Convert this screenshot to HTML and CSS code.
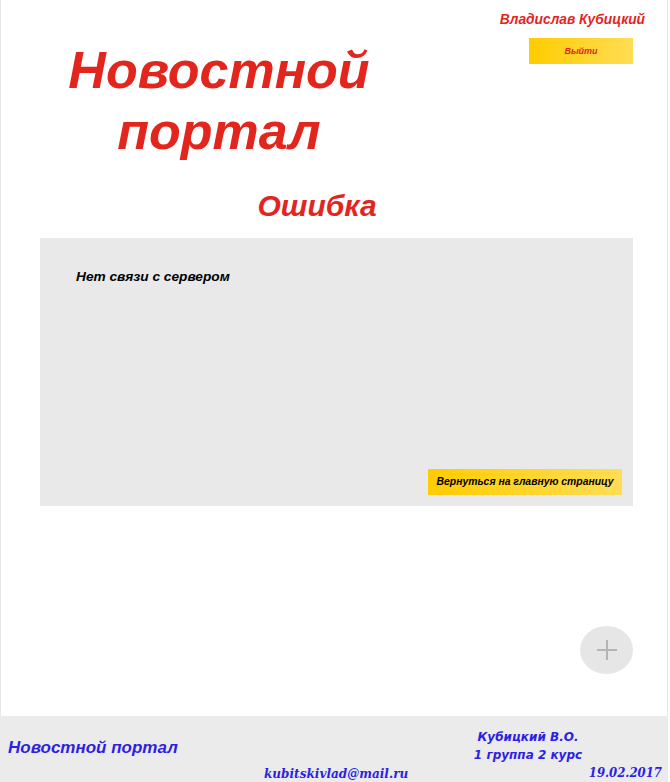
FILE: index.html
```html
<!DOCTYPE html>
<html>
<head>
<meta charset="UTF-8">
<meta name="viewport" content="width=device-width, initial-scale=1.0">
<title>Ошибка</title>
<link rel="stylesheet" href="styles.css">
</head>
<body>
	<div class="page">
		<!-- Header -->
		<div class="header">
			<h1 class="site-title">Новостной<br>портал</h1>
			<div class="user-box">
				<div class="user-name">Владислав Кубицкий</div>
				<a href="#" class="logout-button">Выйти</a>
			</div>
		</div>

		<!-- Error block -->
		<h2 class="error-title">Ошибка</h2>
		<div class="error-box">
			<p class="error-text">Нет связи с сервером</p>
			<a href="#" class="back-button">Вернуться на главную страницу</a>
		</div>

		<div class="fab-row">
			<a href="#" class="add-button">
				<svg width="22" height="22" viewBox="0 0 22 22"><path d="M11 1v20M1 11h20" stroke="#b4b4b4" stroke-width="2" fill="none"/></svg>
			</a>
		</div>

		<!-- Footer -->
		<div class="footer">
			<div class="footer-brand">Новостной портал</div>
			<div class="footer-author">Кубицкий В.О.<br>1 группа 2 курс</div>
			<div class="footer-mail">kubitskivlad@mail.ru</div>
			<div class="footer-date">19.02.2017</div>
		</div>
	</div>
</body>
</html>
```

FILE: styles.css
```css
body {
	font-family: "Liberation Sans", Arial, sans-serif;
	margin: 0;
	padding: 0;
	background-color: #fff;
}

.page {
	width: 668px;
	height: 782px;
	border-left: 1px solid #e6e6e6;
	border-right: 1px solid #e6e6e6;
	box-sizing: border-box;
	display: flex;
	flex-direction: column;
}

/* Header */
.header {
	display: flex;
	height: 176px;
}

.site-title {
	width: 436px;
	margin: 0;
	padding-top: 40px;
	text-align: center;
	color: #e2261d;
	font-size: 52px;
	font-style: italic;
	font-weight: bold;
	line-height: 61px;
}

.user-box {
	flex: 1;
	display: flex;
	flex-direction: column;
	align-items: flex-end;
	padding-top: 12px;
	padding-right: 22px;
}

.user-name {
	color: #e2261d;
	font-size: 13.8px;
	line-height: 16px;
	font-style: italic;
	font-weight: bold;
}

.logout-button {
	display: block;
	width: 104px;
	height: 26px;
	line-height: 26px;
	margin-top: 10px;
	margin-right: 12px;
	text-align: center;
	text-decoration: none;
	color: #e2261d;
	font-size: 9px;
	font-style: italic;
	font-weight: bold;
	background: linear-gradient(to right, #ffcc00, #ffdd55);
}

/* Error */
.error-title {
	margin: 10px 0 0 0;
	padding-right: 34px;
	text-align: center;
	color: #e2261d;
	font-size: 30px;
	font-style: italic;
	font-weight: bold;
	line-height: 40px;
}

.error-box {
	margin: 12px 34px 0 39px;
	height: 268px;
	background-color: #e9e9e9;
	display: flex;
	flex-direction: column;
	justify-content: space-between;
	align-items: flex-start;
	padding: 31px 11px 11px 36px;
	box-sizing: border-box;
}

.error-text {
	margin: 0;
	font-size: 13.7px;
	font-style: italic;
	font-weight: bold;
	color: #000;
}

.back-button {
	align-self: flex-end;
	width: 194px;
	height: 26px;
	line-height: 26px;
	text-align: center;
	text-decoration: none;
	color: #000;
	font-size: 10.4px;
	font-style: italic;
	font-weight: bold;
	background: linear-gradient(to right, #ffcc00, #ffdd55);
}

/* Add button */
.fab-row {
	flex: 1;
	display: flex;
	justify-content: flex-end;
	align-items: flex-end;
	padding: 0 34px 42px 0;
}

.add-button {
	width: 53px;
	height: 48px;
	border-radius: 50%;
	background-color: #e6e6e6;
	display: flex;
	justify-content: center;
	align-items: center;
}

/* Footer */
.footer {
	height: 66px;
	margin-left: -1px;
	margin-right: -1px;
	background-color: #ebebeb;
	color: #2d1fe3;
	font-style: italic;
	font-weight: bold;
	display: grid;
	grid-template-columns: 263px 193px 144px 1fr;
	grid-template-rows: 1fr auto;
	padding-top: 12px;
	box-sizing: border-box;
}

.footer-brand {
	grid-column: 1;
	grid-row: 1 / 3;
	align-self: start;
	padding-left: 8px;
	padding-top: 10px;
	font-size: 17px;
	line-height: 20px;
}

.footer-author {
	grid-column: 3;
	grid-row: 1;
	text-align: center;
	font-family: "DejaVu Sans", Verdana, sans-serif;
	font-size: 12px;
	line-height: 18px;
}

.footer-mail, .footer-date {
	grid-row: 2;
	font-family: "DejaVu Serif Condensed", "DejaVu Serif", Georgia, serif;
	font-stretch: condensed;
	font-size: 13px;
	line-height: 18px;
}

.footer-mail {
	grid-column: 2;
	padding-left: 1px;
	font-size: 13.4px;
}

.footer-date {
	grid-column: 3 / 5;
	text-align: right;
	padding-right: 6px;
}
```
